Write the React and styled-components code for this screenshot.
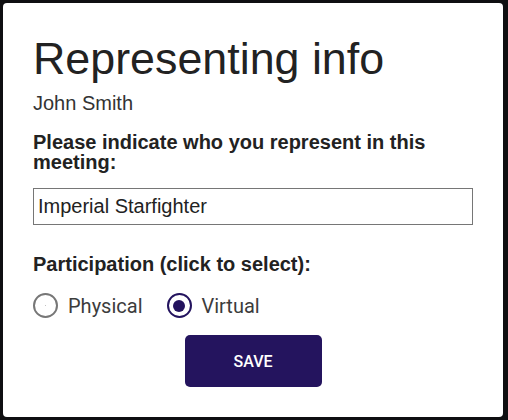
import React, { useState } from 'react';
import styled, { createGlobalStyle } from 'styled-components';

const GlobalStyle = createGlobalStyle`
  html, body {
    margin: 0;
    padding: 0;
    background: #101012;
  }
  * {
    box-sizing: border-box;
  }
`;

const Backdrop = styled.div`
  width: 508px;
  height: 420px;
  padding: 3px 5px 3px 3px;
  background: #0f0f11;
`;

const Dialog = styled.div`
  width: 500px;
  height: 414px;
  background: #ffffff;
  border-radius: 4px;
  padding: 30px 30px 0 30px;
  display: flex;
  flex-direction: column;
  font-family: 'Liberation Sans', Arial, sans-serif;
`;

const Title = styled.h1`
  margin: 0;
  font-size: 44.8px;
  line-height: 50px;
  font-weight: 400;
  color: #222222;
`;

const Subtitle = styled.div`
  margin-top: 9px;
  font-size: 20px;
  line-height: 23px;
  color: #333333;
`;

const Label = styled.label`
  display: block;
  margin-top: ${(p) => p.$top}px;
  font-size: 20px;
  line-height: 20px;
  font-weight: 700;
  color: #222222;
`;

const TextInput = styled.input`
  display: block;
  width: 440px;
  height: 37px;
  margin-top: 16px;
  padding: 0 4px;
  border: 1px solid #767676;
  border-radius: 0;
  font-family: 'Liberation Sans', Arial, sans-serif;
  font-size: 20px;
  color: #222222;
  outline: none;
`;

const RadioRow = styled.div`
  display: flex;
  align-items: center;
  gap: 24px;
  margin-top: 19px;
  height: 25px;
`;

const RadioOption = styled.label`
  display: flex;
  align-items: center;
  gap: 10px;
  cursor: pointer;
  font-family: Roboto, 'Noto Sans', sans-serif;
  font-size: 20px;
  color: #3c3c3c;
`;

const Circle = styled.span`
  width: 25px;
  height: 25px;
  border-radius: 50%;
  border: 2px solid ${(p) => (p.$checked ? '#23135e' : '#777777')};
  display: flex;
  align-items: center;
  justify-content: center;

  &::after {
    content: '';
    width: ${(p) => (p.$checked ? 12 : 1)}px;
    height: ${(p) => (p.$checked ? 12 : 1)}px;
    border-radius: 50%;
    background: ${(p) => (p.$checked ? '#23135e' : '#b0b0b0')};
  }
`;

const Footer = styled.div`
  display: flex;
  justify-content: center;
  margin-top: 17px;
`;

const SaveButton = styled.button`
  width: 137px;
  height: 52px;
  border: none;
  border-radius: 5px;
  background: #24145e;
  color: #ffffff;
  font-family: Roboto, 'Noto Sans', sans-serif;
  font-size: 16px;
  font-weight: 500;
  text-transform: uppercase;
  cursor: pointer;
`;

const App = () => {
  const [mode, setMode] = useState('virtual');
  const [org, setOrg] = useState('Imperial Starfighter');

  return (
    <>
      <GlobalStyle />
      <Backdrop>
        <Dialog>
          <Title>Representing info</Title>
          <Subtitle>John Smith</Subtitle>
          <Label $top={17}>Please indicate who you represent in this meeting:</Label>
          <TextInput value={org} onChange={(e) => setOrg(e.target.value)} />
          <Label $top={29}>Participation (click to select):</Label>
          <RadioRow>
            <RadioOption onClick={() => setMode('physical')}>
              <Circle $checked={mode === 'physical'} />
              Physical
            </RadioOption>
            <RadioOption onClick={() => setMode('virtual')}>
              <Circle $checked={mode === 'virtual'} />
              Virtual
            </RadioOption>
          </RadioRow>
          <Footer>
            <SaveButton>Save</SaveButton>
          </Footer>
        </Dialog>
      </Backdrop>
    </>
  );
};

export default App;
